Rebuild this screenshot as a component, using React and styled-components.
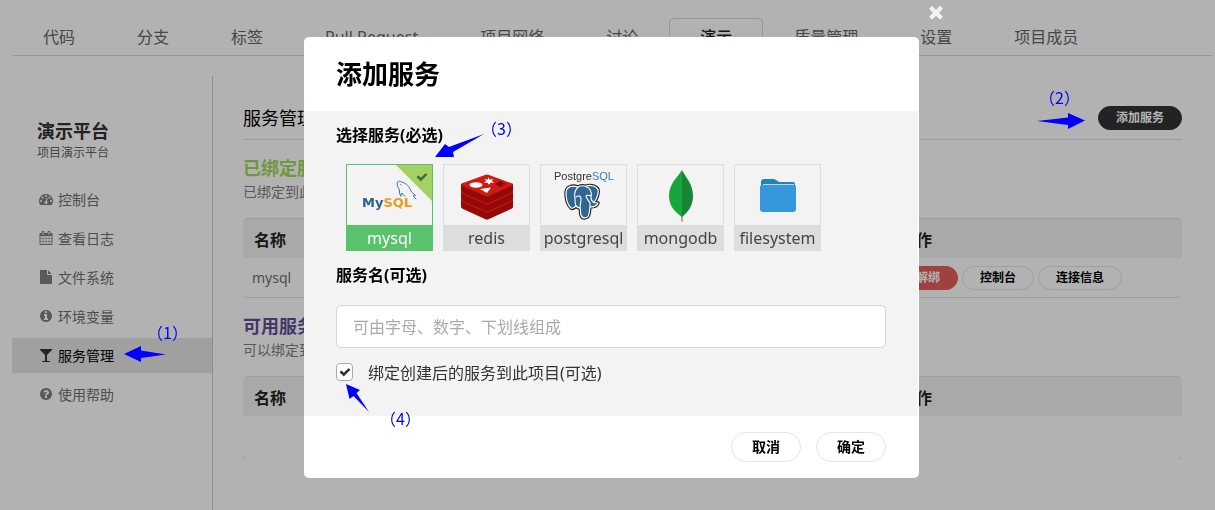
import React, { useState } from 'react';
import styled, { createGlobalStyle, css } from 'styled-components';

const GlobalStyle = createGlobalStyle`
  * { box-sizing: border-box; }
  body {
    margin: 0;
    background: #fff;
    color: #333;
    font-family: "Noto Sans", "Noto Sans CJK SC", sans-serif;
    font-size: 14px;
  }
  button, input { font-family: inherit; }
  h1, h2, h3, p { margin: 0; }
`;

/* ---------- icons ---------- */

const ICONS = {
  times: 'M1490 1322q0 40-28 68l-136 136q-28 28-68 28t-68-28l-294-294-294 294q-28 28-68 28t-68-28l-136-136q-28-28-28-68t28-68l294-294-294-294q-28-28-28-68t28-68l136-136q28-28 68-28t68 28l294 294 294-294q28-28 68-28t68 28l136 136q28 28 28 68t-28 68l-294 294 294 294q28 28 28 68z',
  check: 'M1671 566q0 40-28 68l-724 724-136 136q-28 28-68 28t-68-28l-136-136-362-362q-28-28-28-68t28-68l136-136q28-28 68-28t68 28l294 295 656-657q28-28 68-28t68 28l136 136q28 28 28 68z',
  info: 'M1152 1376v-160q0-14-9-23t-23-9h-96v-512q0-14-9-23t-23-9h-320q-14 0-23 9t-9 23v160q0 14 9 23t23 9h96v320h-96q-14 0-23 9t-9 23v160q0 14 9 23t23 9h448q14 0 23-9t9-23zm-128-896v-160q0-14-9-23t-23-9h-192q-14 0-23 9t-9 23v160q0 14 9 23t23 9h192q14 0 23-9t9-23zm640 416q0 209-103 385.5t-279.5 279.5-385.5 103-385.5-103-279.5-279.5-103-385.5 103-385.5 279.5-279.5 385.5-103 385.5 103 279.5 279.5 103 385.5z',
  question: 'M1024 1376v-192q0-14-9-23t-23-9h-192q-14 0-23 9t-9 23v192q0 14 9 23t23 9h192q14 0 23-9t9-23zm256-672q0-88-55.5-163t-138.5-116-170-41q-243 0-371 213-15 24 8 42l132 100q7 6 19 6 16 0 25-12 53-68 86-92 34-24 86-24 48 0 85.5 26t37.5 59q0 38-20 61t-68 45q-63 28-115.5 86.5t-52.5 125.5v36q0 14 9 23t23 9h192q14 0 23-9t9-23q0-19 21.5-49.5t54.5-49.5q32-18 49-28.5t46-35 44.5-48 28-60.5 12.5-81zm384 192q0 209-103 385.5t-279.5 279.5-385.5 103-385.5-103-279.5-279.5-103-385.5 103-385.5 279.5-279.5 385.5-103 385.5 103 279.5 279.5 103 385.5z',
  glass: 'M1699 186q0 35-43 78l-632 632v768h320q26 0 45 19t19 45-19 45-45 19h-896q-26 0-45-19t-19-45 19-45 45-19h320v-768l-632-632q-43-43-43-78 0-23 18-36.5t38-17.5 43-4h1408q23 0 43 4t38 17.5 18 36.5z',
  file: 'M1152 512v-472q22 14 36 28l408 408q14 14 28 36h-472zm-128 32q0 40 28 68t68 28h544v1056q0 40-28 68t-68 28h-1344q-40 0-68-28t-28-68v-1600q0-40 28-68t68-28h800v544z',
  calendar: 'M192 1664h288v-288h-288v288zm352 0h320v-288h-320v288zm-352-352h288v-320h-288v320zm352 0h320v-320h-320v320zm-352-384h288v-288h-288v288zm736 736h320v-288h-320v288zm-384-736h320v-288h-320v288zm768 736h288v-288h-288v288zm-384-352h320v-320h-320v320zm-352-864v-288q0-13-9.5-22.5t-22.5-9.5h-64q-13 0-22.5 9.5t-9.5 22.5v288q0 13 9.5 22.5t22.5 9.5h64q13 0 22.5-9.5t9.5-22.5zm736 864h288v-320h-288v320zm-384-384h320v-288h-320v288zm384 0h288v-288h-288v288zm32-480v-288q0-13-9.5-22.5t-22.5-9.5h-64q-13 0-22.5 9.5t-9.5 22.5v288q0 13 9.5 22.5t22.5 9.5h64q13 0 22.5-9.5t9.5-22.5zm384-64v1280q0 52-38 90t-90 38h-1408q-52 0-90-38t-38-90v-1280q0-52 38-90t90-38h128v-96q0-66 47-113t113-47h64q66 0 113 47t47 113v96h384v-96q0-66 47-113t113-47h64q66 0 113 47t47 113v96h128q52 0 90 38t38 90z',
  dashboard: 'M384 1152q0-53-37.5-90.5t-90.5-37.5-90.5 37.5-37.5 90.5 37.5 90.5 90.5 37.5 90.5-37.5 37.5-90.5zm192-448q0-53-37.5-90.5t-90.5-37.5-90.5 37.5-37.5 90.5 37.5 90.5 90.5 37.5 90.5-37.5 37.5-90.5zm428 481l101-382q6-26-7.5-48.5t-38.5-29.5-48 6.5-30 39.5l-101 382q-60 5-107 43.5t-63 98.5q-20 77 20 146t117 89 146-20 89-117q16-60-6-117t-72-91zm660-33q0-53-37.5-90.5t-90.5-37.5-90.5 37.5-37.5 90.5 37.5 90.5 90.5 37.5 90.5-37.5 37.5-90.5zm-640-640q0-53-37.5-90.5t-90.5-37.5-90.5 37.5-37.5 90.5 37.5 90.5 90.5 37.5 90.5-37.5 37.5-90.5zm448 192q0-53-37.5-90.5t-90.5-37.5-90.5 37.5-37.5 90.5 37.5 90.5 90.5 37.5 90.5-37.5 37.5-90.5zm320 448q0 261-141 483-19 29-54 29h-1402q-35 0-54-29-141-221-141-483 0-182 71-348t191-286 286-191 348-71 348 71 286 191 191 286 71 348z',
};

const Icon = ({ name, size = 14 }) => (
  <svg width={size} height={size} viewBox="0 0 1792 1792" fill="currentColor" aria-hidden="true">
    <path d={ICONS[name]} />
  </svg>
);

/* ---------- page ---------- */

const Page = styled.div`
  display: flex;
  flex-direction: column;
  min-height: 100vh;
  padding: 18px 3px 0 12px;
`;

const TabBar = styled.nav`
  display: flex;
  border-bottom: 1px solid #d9d9d9;
`;

const Tab = styled.a`
  height: 37px;
  padding: 0 30px;
  border: 1px solid transparent;
  border-bottom: 0;
  border-radius: 5px 5px 0 0;
  color: #666;
  font-size: 16px;
  line-height: 36px;
  white-space: nowrap;
  text-decoration: none;
  ${(p) => p.$active && css`
    border-color: #d9d9d9;
    color: #222;
    font-weight: 500;
  `}
`;

const Columns = styled.div`
  display: flex;
  flex: 1;
  margin-top: 20px;
`;

const Sidebar = styled.aside`
  width: 201px;
  flex: none;
  padding-top: 43px;
  border-right: 1px solid #ccc;
`;

const SideTitle = styled.h2`
  padding-left: 25px;
  color: #333;
  font-size: 18px;
  line-height: 24px;
`;

const SideNote = styled.p`
  padding-left: 25px;
  color: #666;
  font-size: 12px;
  line-height: 20px;
`;

const SideMenu = styled.nav`
  display: flex;
  flex-direction: column;
  gap: 4px;
  margin-top: 19px;
`;

const SideLink = styled.a`
  display: flex;
  align-items: center;
  gap: 5px;
  height: 35px;
  padding: 0 0 2px 27px;
  color: ${(p) => (p.$active ? '#000' : '#707070')};
  background: ${(p) => (p.$active ? '#e6e6e6' : 'transparent')};
  text-decoration: none;
  svg { color: ${(p) => (p.$active ? '#333' : '#808080')}; }
`;

const Main = styled.main`
  flex: 1;
  padding: 30px 30px 40px;
`;

const MainHeader = styled.header`
  display: flex;
  justify-content: space-between;
  align-items: center;
  padding-bottom: 9px;
  border-bottom: 1px solid #e0e0e0;
`;

const MainTitle = styled.h1`
  color: #000;
  font-size: 18px;
  font-weight: 400;
  line-height: 24px;
`;

const PILL_TONES = {
  dark: css`background: #333; border-color: #333; color: #fff;`,
  danger: css`background: #e35d5b; border-color: #e35d5b; color: #fff;`,
  plain: css`background: transparent; border-color: #e6e6e6; color: #000;`,
};

const Pill = styled.button`
  height: ${(p) => (p.$large ? 30 : 24)}px;
  padding: 0 ${(p) => (p.$large ? 20 : 17)}px;
  border: 1px solid;
  border-radius: 15px;
  font-size: ${(p) => (p.$large ? 14 : 12)}px;
  font-weight: 700;
  line-height: 20px;
  white-space: nowrap;
  cursor: pointer;
  ${(p) => PILL_TONES[p.$tone || 'plain']}
`;

const Section = styled.section`
  margin-top: 16px;
`;

const SectionTitle = styled.h2`
  color: ${(p) => p.$color};
  font-size: 18px;
  line-height: 24px;
`;

const SectionNote = styled.p`
  margin: 2px 0 16px;
  color: #808080;
  line-height: 20px;
`;

const TableFrame = styled.div`
  position: relative;
  border: solid #e0e0e0;
  border-width: 1px 0;
  border-radius: 5px;
  ${(p) => p.$empty && css`
    &::after {
      content: "";
      position: absolute;
      left: 4px;
      right: 4px;
      bottom: -1px;
      height: 1px;
      background: #fff;
    }
  `}
`;

const Table = styled.table`
  width: 100%;
  border-collapse: collapse;
  table-layout: fixed;
  th {
    height: 39px;
    padding: 0 11px;
    background: #f2f2f2;
    color: #222;
    font-size: 16px;
    text-align: left;
  }
  th:first-child { border-top-left-radius: 5px; }
  th:last-child { border-top-right-radius: 5px; }
  td {
    height: ${(p) => (p.$empty ? 43 : 39)}px;
    padding: 0 9px;
    color: #707070;
  }
`;

const ActionColumn = styled.col`
  width: 293px;
`;

const Actions = styled.div`
  display: flex;
  gap: 4px;
`;

/* ---------- dialog ---------- */

const Overlay = styled.div`
  position: fixed;
  inset: 0;
  display: flex;
  justify-content: center;
  align-items: flex-start;
  padding: 37px 0 0 8px;
  background: rgba(0, 0, 0, 0.3);
`;

const Dialog = styled.form`
  position: relative;
  width: 615px;
  max-width: 100%;
  border-radius: 5px;
  background: #fff;
`;

const CloseButton = styled.button`
  position: absolute;
  top: -35px;
  right: -27px;
  display: flex;
  padding: 0;
  border: 0;
  background: none;
  color: #f2f2f2;
  cursor: pointer;
`;

const DialogHeader = styled.header`
  padding: 20px 32px;
`;

const DialogTitle = styled.h2`
  color: #000;
  font-size: 26px;
  line-height: 34px;
`;

const DialogBody = styled.div`
  margin-right: 1px;
  padding: 12px 32px 33px;
  background: #f3f3f3;
`;

const FieldTitle = styled.div`
  color: #000;
  font-size: 16px;
  font-weight: 700;
  line-height: 24px;
`;

const ServiceList = styled.div`
  display: flex;
  flex-wrap: wrap;
  gap: 10px;
  padding: 17px 10px 12px;
`;

const ServiceCard = styled.label`
  position: relative;
  width: 87px;
  border: 1px solid ${(p) => (p.$selected ? '#5ac26d' : '#ddd')};
  cursor: pointer;
  > svg { display: block; }
`;

const HiddenRadio = styled.input`
  position: absolute;
  opacity: 0;
  margin: 0;
`;

const ServiceName = styled.span`
  display: block;
  height: 25px;
  padding-top: 1px;
  background: ${(p) => (p.$selected ? '#5ac26d' : '#ddd')};
  color: ${(p) => (p.$selected ? '#fff' : '#444')};
  font-size: 16px;
  line-height: 24px;
  text-align: center;
`;

const SelectedMark = styled.span`
  position: absolute;
  top: 0;
  right: 0;
  width: 36px;
  height: 36px;
  padding: 6px 0 0 20px;
  background: #a3d164;
  clip-path: polygon(0 0, 100% 0, 100% 100%);
  color: #4c6b33;
  line-height: 0;
`;

const NameInput = styled.input`
  display: block;
  width: 100%;
  height: 43px;
  margin: 18px 0 13px;
  padding: 0 16px;
  border: 1px solid #d6d6d6;
  border-radius: 5px;
  background: #fff;
  font-size: 16px;
  &::placeholder { color: #aaa; opacity: 1; }
`;

const CheckRow = styled.label`
  display: flex;
  align-items: center;
  gap: 15px;
  height: 22px;
  color: #333;
  font-size: 16px;
  cursor: pointer;
`;

const CheckBox = styled.span`
  position: relative;
  display: flex;
  align-items: center;
  justify-content: center;
  width: 17px;
  height: 18px;
  border: 1px solid #aaa;
  border-radius: 4px;
  background: #fff;
  input {
    position: absolute;
    inset: 0;
    margin: 0;
    opacity: 0;
  }
`;

const DialogFooter = styled.footer`
  display: flex;
  justify-content: flex-end;
  gap: 15px;
  padding: 16px 33px 16px 32px;
`;

/* ---------- guide annotations, placed freely over the screen ---------- */

const GuideArrows = styled.svg`
  position: fixed;
  top: 0;
  left: 0;
  width: 1215px;
  height: 510px;
  pointer-events: none;
`;

const GuideNumber = styled.span`
  position: fixed;
  left: ${(p) => p.$x}px;
  top: ${(p) => p.$y}px;
  color: #00f;
  font-family: "Noto Sans CJK SC", sans-serif;
  font-size: 16px;
  line-height: 20px;
  pointer-events: none;
`;

/* ---------- service logos ---------- */

const Logo = ({ children }) => (
  <svg width="85" height="60" viewBox="0 0 85 60" aria-hidden="true">{children}</svg>
);

const MysqlLogo = () => (
  <Logo>
    <text x="15" y="42" fontFamily="DejaVu Sans, sans-serif" fontSize="13" fontWeight="700">
      <tspan fill="#2c628f">My</tspan><tspan fill="#eb9a1f">SQL</tspan>
    </text>
    <g fill="none" stroke="#3b7299" strokeWidth="1" strokeLinecap="round" strokeLinejoin="round">
      <path d="M54 31c-1-1-2-3-1.500-6-2-3-3-6-2-8 1-1 3-1 4 0 5 1 8 5 9.500 9 1 2 3 3 4.500 4.500l-2.500.5 3 3" />
      <path d="M54 31c0-2 .500-3 1-3 1 2 2 2.500 3 3" />
      <path d="M53.500 19.500l.500.500" />
    </g>
  </Logo>
);

const RedisLogo = () => (
  <Logo>
    {[16, 8, 0].map((dy) => (
      <g key={dy} transform={`translate(0 ${dy})`}>
        <path d="M17 19v7q0 1 2 2l22 10q2 1 4 0l22-10q2-1 2-2v-7z" fill="#930a08" />
        <path d="M19 18l22-8q2-1 4 0l22 8q4 1 0 3L45 31q-2 1-4 0L19 21q-4-2 0-3z" fill="#cf1a14" />
      </g>
    ))}
    <ellipse cx="32" cy="20" rx="6.500" ry="2.700" fill="#fff" />
    <path d="M44 12l1.500 2.500 4-.5-2 2 3 1.500-4 .3-1.500 2-1.500-2-4-.3 3-1.500-2-2 3.500.5z" fill="#fff" />
    <path d="M36 24l11-1.500-4 5.500z" fill="#fff" />
    <path d="M51 19l6-3v6z" fill="#6f0705" /><path d="M57 16l5 3-5 3z" fill="#9f0d0b" />
  </Logo>
);

const ELEPHANT = 'M37 22c-5-2-12-1-12 6 0 6 2 12 5 15 2 1 3 0 5-2 1 1 3 2 4 2 1 2 0 4 1 7 1 4 7 4 8-1l1-7c3 0 7-1 8-4l-4-.5c3-4 5-10 4-13-2-4-9-5-12-3-2-1-5-1-8 .5z';

const PostgresLogo = () => (
  <Logo>
    <text x="13" y="15" fontFamily="Liberation Sans, sans-serif" fontSize="11">
      <tspan fill="#333">Postgre</tspan><tspan fill="#3f7dab">SQL</tspan>
    </text>
    <path d={ELEPHANT} fill="#2f6792" stroke="#222" strokeWidth="3.500" strokeLinejoin="round" />
    <path d={ELEPHANT} fill="#2f6792" stroke="#fff" strokeWidth="1.200" strokeLinejoin="round" />
    <path d="M37 22c-3 3-4 7-3 12 0 3 0 5 1 7M45 21.500c5 2 6 6 5 11 0 3 1 4 3 5M35 32c3-2 5-1 5 2 0 3-1 6-1 9M50 31c-2-1-5-1-5 0 0 2 3 5 4 7v4" fill="none" stroke="#fff" strokeWidth="1.100" strokeLinecap="round" />
  </Logo>
);

const MongoLogo = () => (
  <Logo>
    <path d="M43 49l1 8 1-8z" fill="#b09a78" stroke="#b8a583" />
    <path d="M44 5c-4 7-13 13-13 26 0 10 6 16 13 21z" fill="#17a63c" />
    <path d="M44 5c3 7 11 13 11 26 0 10-5 16-11 21z" fill="#168534" />
  </Logo>
);

const FolderLogo = () => (
  <Logo>
    <path d="M26 17q0-3 3-3h9q2 0 3 1l3 2h14q2 0 2 2v8H26z" fill="#2381bd" />
    <path d="M28 19h31v4H28z" fill="#d8cfcc" />
    <path d="M27 20h32q2 0 2 2v22q0 3-3 3H28q-3 0-3-3V22q0-2 2-2z" fill="#3498db" />
  </Logo>
);

/* ---------- data ---------- */

const TABS = ['代码', '分支', '标签', 'Pull Request', '项目网络', '讨论', '演示', '质量管理', '设置', '项目成员'];

const MENU = [
  ['dashboard', '控制台'],
  ['calendar', '查看日志'],
  ['file', '文件系统'],
  ['info', '环境变量'],
  ['glass', '服务管理'],
  ['question', '使用帮助'],
];

const SERVICES = [
  ['mysql', MysqlLogo],
  ['redis', RedisLogo],
  ['postgresql', PostgresLogo],
  ['mongodb', MongoLogo],
  ['filesystem', FolderLogo],
];

const ServiceTable = ({ children, empty }) => (
  <TableFrame $empty={empty}>
    <Table $empty={empty}>
      <colgroup><col /><ActionColumn /></colgroup>
      <thead><tr><th>名称</th><th>操作</th></tr></thead>
      <tbody>{children}</tbody>
    </Table>
  </TableFrame>
);

export default function App() {
  const [service, setService] = useState('mysql');
  const [bind, setBind] = useState(true);

  return (
    <>
      <GlobalStyle />
      <Page>
        <TabBar>
          {TABS.map((tab) => <Tab key={tab} href="#" $active={tab === '演示'}>{tab}</Tab>)}
        </TabBar>
        <Columns>
          <Sidebar>
            <SideTitle>演示平台</SideTitle>
            <SideNote>项目演示平台</SideNote>
            <SideMenu>
              {MENU.map(([icon, text]) => (
                <SideLink key={text} href="#" $active={text === '服务管理'}>
                  <Icon name={icon} />{text}
                </SideLink>
              ))}
            </SideMenu>
          </Sidebar>
          <Main>
            <MainHeader>
              <MainTitle>服务管理</MainTitle>
              <Pill type="button" $tone="dark">添加服务</Pill>
            </MainHeader>
            <Section>
              <SectionTitle $color="#a0d95a">已绑定服务</SectionTitle>
              <SectionNote>已绑定到此项目的服务</SectionNote>
              <ServiceTable>
                <tr>
                  <td>mysql</td>
                  <td>
                    <Actions>
                      <Pill type="button" $tone="danger">解绑</Pill>
                      <Pill type="button">控制台</Pill>
                      <Pill type="button">连接信息</Pill>
                    </Actions>
                  </td>
                </tr>
              </ServiceTable>
            </Section>
            <Section>
              <SectionTitle $color="#5f4f95">可用服务</SectionTitle>
              <SectionNote>可以绑定到此项目的服务</SectionNote>
              <ServiceTable empty><tr><td colSpan={2} /></tr></ServiceTable>
            </Section>
          </Main>
        </Columns>
      </Page>

      <Overlay>
        <Dialog role="dialog" aria-labelledby="dialog-title" onSubmit={(e) => e.preventDefault()}>
          <CloseButton type="button" aria-label="关闭"><Icon name="times" size={20} /></CloseButton>
          <DialogHeader><DialogTitle id="dialog-title">添加服务</DialogTitle></DialogHeader>
          <DialogBody>
            <FieldTitle id="service-title">选择服务(必选)</FieldTitle>
            <ServiceList role="radiogroup" aria-labelledby="service-title">
              {SERVICES.map(([name, Drawing]) => {
                const selected = name === service;
                return (
                  <ServiceCard key={name} $selected={selected}>
                    <HiddenRadio type="radio" name="service" checked={selected} onChange={() => setService(name)} />
                    <Drawing />
                    {selected && <SelectedMark><Icon name="check" size={12} /></SelectedMark>}
                    <ServiceName $selected={selected}>{name}</ServiceName>
                  </ServiceCard>
                );
              })}
            </ServiceList>
            <FieldTitle as="label" htmlFor="service-name">服务名(可选)</FieldTitle>
            <NameInput id="service-name" placeholder="可由字母、数字、下划线组成" />
            <CheckRow>
              <CheckBox>
                <input type="checkbox" checked={bind} onChange={(e) => setBind(e.target.checked)} />
                {bind && <Icon name="check" size={12} />}
              </CheckBox>
              绑定创建后的服务到此项目(可选)
            </CheckRow>
          </DialogBody>
          <DialogFooter>
            <Pill type="button" $large>取消</Pill>
            <Pill type="submit" $large>确定</Pill>
          </DialogFooter>
        </Dialog>
      </Overlay>

      <GuideArrows viewBox="0 0 1215 510" fill="#00f" aria-hidden="true">
        <path d="M124 354l17-8v4.500l25 4-25 3.500v4z" />
        <path d="M1085 120.500l-17-7.500v4.500l-31 3.500 31 4v4z" />
        <path d="M435 157l10-13 4 3 35-13-31 18 1 5z" />
        <path d="M346 384l14 6-3.500 3 12.500 19-15.500-16-4 3z" />
      </GuideArrows>
      <GuideNumber $x={147} $y={322}>（1）</GuideNumber>
      <GuideNumber $x={1039} $y={87}>（2）</GuideNumber>
      <GuideNumber $x={481} $y={118}>（3）</GuideNumber>
      <GuideNumber $x={380} $y={408}>（4）</GuideNumber>
    </>
  );
}
